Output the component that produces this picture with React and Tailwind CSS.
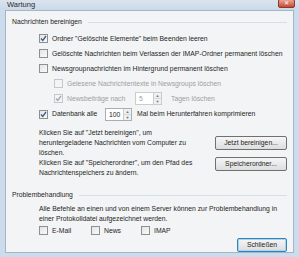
import { useState } from "react";

const font = "font-['Liberation_Sans',Arial,sans-serif]";

function Box({ checked, disabled }) {
  return (
    <span
      className={`w-[9px] h-[9px] shrink-0 border flex items-center justify-center ${
        disabled ? "border-[#c4c8cc] bg-[#f4f4f4]" : "border-[#8e8f8f] bg-gradient-to-br from-[#e4e4e4] to-[#fafafa]"
      }`}
    >
      {checked && (
        <svg width="7" height="7" viewBox="0 0 7 7">
          <path
            d="M1 3.5 L2.8 5.5 L6 1"
            fill="none"
            stroke={disabled ? "#a0a8b0" : "#3a5a8c"}
            strokeWidth="1.3"
          />
        </svg>
      )}
    </span>
  );
}

function Check({ label, checked, disabled, className = "" }) {
  return (
    <div className={`flex items-center gap-[4px] whitespace-nowrap ${className}`}>
      <Box checked={checked} disabled={disabled} />
      <span className={disabled ? "text-[#a0a0a0]" : "text-[#1e1e1e]"}>{label}</span>
    </div>
  );
}

function Spin({ value, disabled, w }) {
  return (
    <div className={`flex h-[13px] ${w} border ${disabled ? "border-[#c8cdd2]" : "border-[#abadb3]"} bg-white`}>
      <span className={`flex-1 pl-[3px] leading-[11px] ${disabled ? "text-[#a0a0a0]" : ""}`}>{value}</span>
      <div className="w-[8px] flex flex-col border-l border-[#c8cdd2]">
        <span className="flex-1 border-b border-[#d6d9dc] bg-[#eef0f2] text-[4px] leading-[5px] text-center text-[#777]">▲</span>
        <span className="flex-1 bg-[#eef0f2] text-[4px] leading-[5px] text-center text-[#777]">▼</span>
      </div>
    </div>
  );
}

function Btn({ children, focus }) {
  return (
    <button
      className={`h-[14px] rounded-[2px] border text-[6.8px] leading-none bg-gradient-to-b from-[#f6f6f6] to-[#dddddd] ${
        focus ? "border-[#3c7fb1] shadow-[inset_0_0_0_1px_#9fd5f5]" : "border-[#707070]"
      }`}
    >
      {children}
    </button>
  );
}

function Group({ title, children }) {
  return (
    <div>
      <div className="flex items-center gap-[6px] h-[12px]">
        <span>{title}</span>
        <span className="flex-1 border-t border-[#d5dfe5]" />
      </div>
      {children}
    </div>
  );
}

export default function App() {
  const [x] = useState(0);
  return (
    <div className={`w-[299px] h-[257px] bg-[#cddcec] flex flex-col text-[6.8px] leading-[10px] text-[#1e1e1e] ${font}`}>
      <div className="h-[17px] flex items-center pl-[7px] pr-[4px] bg-gradient-to-b from-[#dbe4ed] to-[#c9d9eb]">
        <span className="flex-1 text-[7.5px] text-[#2a2a2a]">Wartung</span>
        <span className="w-[17px] h-[9px] mt-[-4px] rounded-[2px] bg-gradient-to-b from-[#e8a493] to-[#c7452c] border border-[#8a3a30] flex items-center justify-center text-white text-[6px] leading-none">
          ✕
        </span>
      </div>
      <div className="flex-1 mx-[5px] mb-[4px] bg-[#f3f4f5] border border-[#a5b5c6] pl-[6px] pr-[6px] pt-[5px] flex flex-col">
        <Group title="Nachrichten bereinigen">
          <div className="pl-[27px] pt-[3px] flex flex-col">
            <Check className="h-[15px]" checked label={'Ordner "Gelöschte Elemente" beim Beenden leeren'} />
            <Check className="h-[15px]" label="Gelöschte Nachrichten beim Verlassen der IMAP-Ordner permanent löschen" />
            <Check className="h-[15px]" label="Newsgroupnachrichten im Hintergrund permanent löschen" />
            <div className="pl-[15px] flex flex-col">
              <Check className="h-[15px]" disabled label="Gelesene Nachrichtentexte in Newsgroups löschen" />
              <div className="h-[15px] flex items-center">
                <Check className="w-[81px]" disabled checked label="Newsbeiträge nach" />
                <Spin value="5" disabled w="w-[27px]" />
                <span className="ml-[9px] text-[#a0a0a0]">Tagen löschen</span>
              </div>
            </div>
            <div className="h-[16px] flex items-center">
              <Check className="w-[66px]" checked label="Datenbank alle" />
              <Spin value="100" w="w-[27px]" />
              <span className="ml-[5px]">Mal beim Herunterfahren komprimieren</span>
            </div>
            <div className="flex items-start mt-[6px]">
              <p className="flex-1 pr-[8px]">
                Klicken Sie auf "Jetzt bereinigen", um heruntergeladene Nachrichten vom Computer zu löschen.
              </p>
              <div className="pt-[8px]">
                <div className="w-[72px] flex flex-col"><Btn>Jetzt bereinigen...</Btn></div>
              </div>
            </div>
            <div className="flex items-start">
              <p className="flex-1 pr-[8px]">
                Klicken Sie auf "Speicherordner", um den Pfad des Nachrichtenspeichers zu ändern.
              </p>
              <div className="-mt-[1px] w-[72px] flex flex-col"><Btn>Speicherordner...</Btn></div>
            </div>
          </div>
        </Group>
        <div className="mt-[11px]">
          <Group title="Problembehandlung">
            <div className="pl-[27px] pt-[3px] flex flex-col">
              <p>
                Alle Befehle an einen und von einem Server können zur Problembehandlung in einer Protokolldatei aufgezeichnet werden.
              </p>
              <div className="flex h-[13px] items-center">
                <Check className="w-[52px]" label="E-Mail" />
                <Check className="w-[50px]" label="News" />
                <Check label="IMAP" />
              </div>
            </div>
          </Group>
        </div>
        <div className="flex justify-end mt-[1px]">
          <div className="w-[50px] flex flex-col"><Btn focus>Schließen</Btn></div>
        </div>
      </div>
    </div>
  );
}
